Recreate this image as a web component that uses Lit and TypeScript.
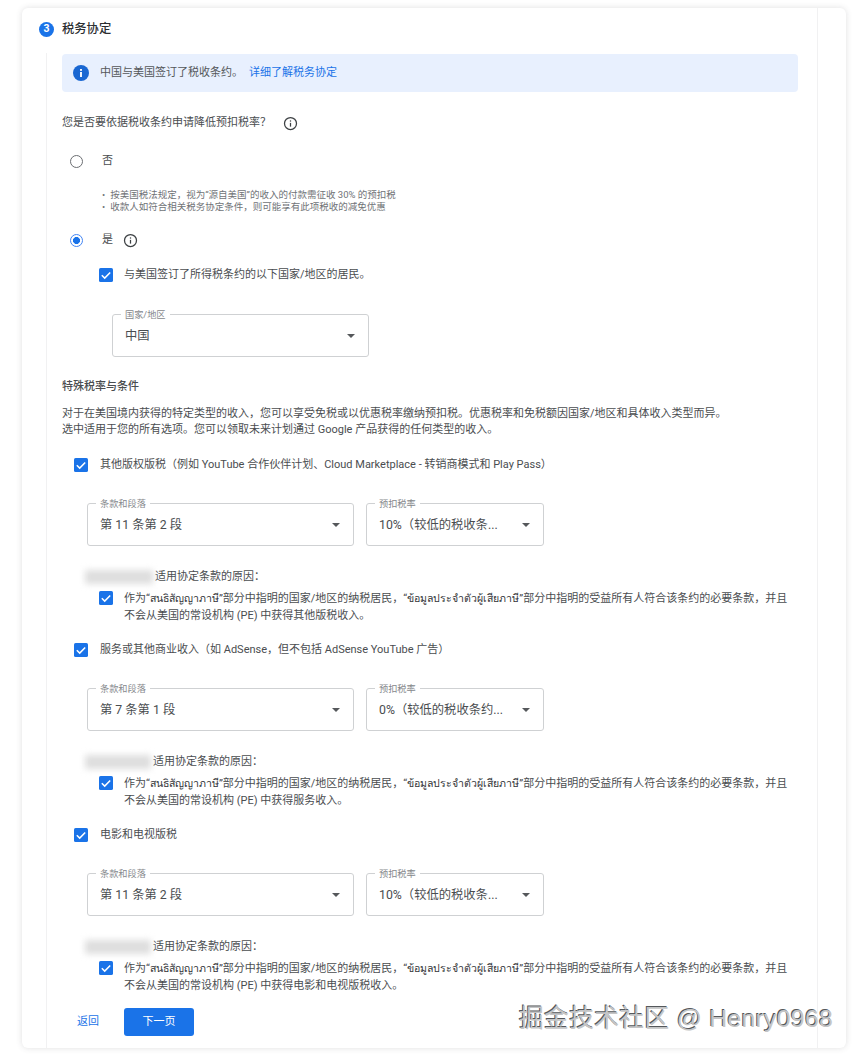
import { LitElement, html, css, svg } from 'lit'
import { customElement } from 'lit/decorators.js'

const groups = [
  {
    title: '其他版权版税（例如 YouTube 合作伙伴计划、Cloud Marketplace - 转销商模式和 Play Pass）',
    clause: '第 11 条第 2 段',
    rate: '10%（较低的税收条...',
    income: '其他版税收入。',
    blur: 68,
  },
  {
    title: '服务或其他商业收入（如 AdSense，但不包括 AdSense YouTube 广告）',
    clause: '第 7 条第 1 段',
    rate: '0%（较低的税收条约...',
    income: '服务收入。',
    blur: 66,
  },
  {
    title: '电影和电视版税',
    clause: '第 11 条第 2 段',
    rate: '10%（较低的税收条...',
    income: '电影和电视版税收入。',
    blur: 66,
  },
]

const infoOutline = svg`<circle cx="12" cy="12" r="9.6" fill="none" stroke="currentColor" stroke-width="2"/><rect x="11" y="11" width="2" height="6" fill="currentColor"/><rect x="11" y="7" width="2" height="2" fill="currentColor"/>`

@customElement('app-root')
export class AppRoot extends LitElement {
  static styles = css`
    :host {
      display: block;
      width: 860px;
      height: 1061px;
      background: #fff;
      overflow: hidden;
      position: relative;
      font-family: Roboto, "Noto Sans CJK SC", "Noto Sans", sans-serif;
      color: #4a4d50;
      font-size: 11px;
      line-height: 16px;
    }

    .card {
      box-sizing: border-box;
      display: flex;
      width: 824px;
      height: 1040px;
      margin-left: 22px;
      position: relative;
      top: 8px;
      background: #fff;
      border-radius: 6px;
      box-shadow: 0 0 6px rgba(60, 64, 67, 0.16);
    }

    .main {
      flex: 1;
      min-width: 0;
    }

    .side {
      width: 28px;
      border-left: 1px solid #f1f1f2;
    }

    .head {
      display: flex;
      align-items: center;
      gap: 8px;
      height: 45px;
      padding: 0 0 3px 17px;
      box-sizing: border-box;
      font-size: 12.3px;
      font-weight: 500;
      color: #2b2e31;
    }

    .step {
      width: 15px;
      height: 15px;
      border-radius: 50%;
      background: #1a73e8;
      color: #fff;
      font-size: 10.5px;
      font-weight: 700;
      display: flex;
      align-items: center;
      justify-content: center;
    }

    .body {
      margin-left: 24px;
      height: 995px;
      box-sizing: border-box;
      border-left: 1px solid #f1f1f2;
      padding: 1px 19px 0 15px;
    }

    .banner {
      display: flex;
      align-items: center;
      height: 38px;
      border-radius: 4px;
      background: #e8f0fe;
      padding-left: 11px;
      color: #54575a;
    }

    .banner svg {
      width: 16px;
      height: 16px;
      margin-right: 11px;
      color: #1967d2;
    }

    .banner a {
      color: #1a73e8;
      margin-left: 6px;
    }

    .question {
      display: flex;
      align-items: center;
      height: 16px;
      margin-top: 23px;
    }

    .info {
      width: 15px;
      height: 15px;
      color: #3c4043;
    }

    .question .info {
      margin-left: 12px;
    }

    .radio-row {
      display: flex;
      align-items: center;
      height: 16px;
      padding-left: 8px;
      gap: 19px;
    }

    .radio {
      box-sizing: border-box;
      width: 13px;
      height: 13px;
      border-radius: 50%;
      border: 1.3px solid #6b6e72;
      flex: none;
    }

    .radio.on {
      border-color: #4285f4;
      background: radial-gradient(circle, #1a73e8 0 3.2px, #fff 3.8px);
    }

    .no {
      margin-top: 22px;
    }

    .yes {
      margin-top: 19px;
    }

    .yes .info {
      margin-left: -9px;
    }

    .notes {
      margin: 20px 0 0 40px;
      padding: 0;
      list-style: none;
      font-size: 9.5px;
      line-height: 12px;
      color: #707377;
    }

    .notes li::before {
      content: "•";
      margin-right: 5px;
    }

    .check-row {
      display: flex;
      align-items: center;
      gap: 11px;
      white-space: nowrap;
    }

    .box {
      width: 14px;
      height: 14px;
      flex: none;
      display: block;
    }

    .resident {
      margin: 19px 0 0 37px;
      height: 16px;
    }

    .select {
      box-sizing: border-box;
      position: relative;
      height: 43px;
      border: 1px solid #cfd1d3;
      border-radius: 3px;
      display: flex;
      align-items: center;
      justify-content: space-between;
      padding: 0 13px 0 12px;
      font-size: 12.3px;
      white-space: nowrap;
    }

    .select label {
      position: absolute;
      left: 8px;
      top: -6px;
      padding: 0 4px;
      background: #fff;
      font-size: 9.2px;
      line-height: 11px;
      color: #85888c;
    }

    .arrow {
      width: 0;
      height: 0;
      border: 4px solid transparent;
      border-top: 4.5px solid #55585b;
      border-bottom: 0;
    }

    .country {
      width: 257px;
      margin: 31px 0 0 50px;
    }

    h3 {
      margin: 22px 0 0;
      font-size: 11px;
      line-height: 16px;
      font-weight: 500;
    }

    .intro {
      margin: 11px 0 0;
      white-space: nowrap;
    }

    .group {
      height: 185px;
    }

    .groups {
      margin-top: 19px;
    }

    .group > .check-row {
      margin-left: 12px;
      height: 16px;
      gap: 12px;
    }

    .selects {
      display: flex;
      gap: 12px;
      margin: 30px 0 0 25px;
    }

    .clause {
      width: 267px;
    }

    .rate {
      width: 178px;
    }

    .reason {
      display: flex;
      align-items: center;
      height: 16px;
      margin: 23px 0 0 23px;
    }

    .smudge {
      height: 14px;
      margin-right: 2px;
      background: #dedede;
      filter: blur(3px);
    }

    .statement {
      display: flex;
      gap: 11px;
      margin: 5px 0 0 37px;
      line-height: 16.6px;
      white-space: nowrap;
    }

    .statement .box {
      margin-top: 1px;
    }

    .statement > div {
      padding-top: 1px;
    }

    .statement span {
      display: block;
    }

    .statement .thai {
      font-weight: 400;
      font-size: 10.55px;
      color: #333538;
    }

    .actions {
      display: flex;
      align-items: center;
      margin: -4px 0 0 15px;
    }

    .back {
      color: #1a73e8;
      width: 47px;
    }

    .next {
      box-sizing: border-box;
      width: 70px;
      height: 28px;
      border-radius: 3px;
      background: #1a73e8;
      color: #fff;
      display: flex;
      align-items: center;
      justify-content: center;
    }

    .mark {
      position: absolute;
      left: 519px;
      top: 1004px;
      font-family: "Liberation Sans", "Noto Sans CJK SC", sans-serif;
      font-size: 24.8px;
      letter-spacing: 0.28px;
      line-height: 30px;
      white-space: nowrap;
      color: #c4c5c6;
      text-shadow: -1px -1px 0 #55585b, 1px 1px 0 #fff;
    }
  `

  private box() {
    return html`<svg class="box" viewBox="0 0 14 14">
      <rect width="14" height="14" rx="1.6" fill="#1a73e8"/>
      <path d="M2.8 7.2l2.9 2.9 5.5-5.7" fill="none" stroke="#fff" stroke-width="1.5"/>
    </svg>`
  }

  private select(label: string, value: string, cls: string) {
    return html`<div class="select ${cls}">
      <label>${label}</label>
      <span>${value}</span>
      <i class="arrow"></i>
    </div>`
  }

  private group(g: (typeof groups)[number]) {
    return html`<div class="group">
      <div class="check-row">${this.box()}<span>${g.title}</span></div>
      <div class="selects">
        ${this.select('条款和段落', g.clause, 'clause')}
        ${this.select('预扣税率', g.rate, 'rate')}
      </div>
      <div class="reason">
        <i class="smudge" style="width:${g.blur}px"></i>
        <span>适用协定条款的原因：</span>
      </div>
      <div class="statement">
        ${this.box()}
        <div>
          <span>作为“<b class="thai">สนธิสัญญาภาษี</b>”部分中指明的国家/地区的纳税居民，“<b class="thai">ข้อมูลประจำตัวผู้เสียภาษี</b>”部分中指明的受益所有人符合该条约的必要条款，并且</span>
          <span>不会从美国的常设机构 (PE) 中获得${g.income}</span>
        </div>
      </div>
    </div>`
  }

  render() {
    return html`
      <div class="card">
        <div class="main">
          <div class="head"><span class="step">3</span><span>税务协定</span></div>
          <div class="body">
            <div class="banner">
              <svg viewBox="0 0 24 24">
                <circle cx="12" cy="12" r="12" fill="currentColor"/>
                <rect x="10.6" y="10.5" width="2.8" height="7.5" fill="#fff"/>
                <rect x="10.6" y="6" width="2.8" height="2.8" fill="#fff"/>
              </svg>
              <span>中国与美国签订了税收条约。</span>
              <a>详细了解税务协定</a>
            </div>
            <div class="question">
              <span>您是否要依据税收条约申请降低预扣税率？</span>
              <svg class="info" viewBox="0 0 24 24">${infoOutline}</svg>
            </div>
            <div class="radio-row no"><i class="radio"></i><span>否</span></div>
            <ul class="notes">
              <li>按美国税法规定，视为“源自美国”的收入的付款需征收 30% 的预扣税</li>
              <li>收款人如符合相关税务协定条件，则可能享有此项税收的减免优惠</li>
            </ul>
            <div class="radio-row yes">
              <i class="radio on"></i><span>是</span>
              <svg class="info" viewBox="0 0 24 24">${infoOutline}</svg>
            </div>
            <div class="check-row resident">${this.box()}<span>与美国签订了所得税条约的以下国家/地区的居民。</span></div>
            ${this.select('国家/地区', '中国', 'country')}
            <h3>特殊税率与条件</h3>
            <p class="intro">
              对于在美国境内获得的特定类型的收入，您可以享受免税或以优惠税率缴纳预扣税。优惠税率和免税额因国家/地区和具体收入类型而异。<br />
              选中适用于您的所有选项。您可以领取未来计划通过 Google 产品获得的任何类型的收入。
            </p>
            <div class="groups">${groups.map((g) => this.group(g))}</div>
            <div class="actions">
              <span class="back">返回</span>
              <span class="next">下一页</span>
            </div>
          </div>
        </div>
        <div class="side"></div>
      </div>
      <div class="mark">掘金技术社区 @ Henry0968</div>
    `
  }
}
